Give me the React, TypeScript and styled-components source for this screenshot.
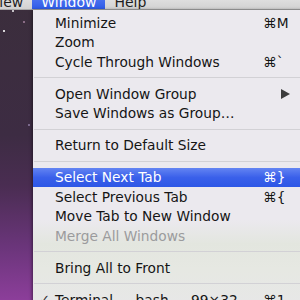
import styled, { createGlobalStyle } from "styled-components";

type Item =
  | { kind: "sep" }
  | {
      kind: "item";
      label: string;
      shortcut?: string;
      submenu?: boolean;
      checked?: boolean;
      highlighted?: boolean;
      disabled?: boolean;
    };

const items: Item[] = [
  { kind: "item", label: "Minimize", shortcut: "⌘M" },
  { kind: "item", label: "Zoom" },
  { kind: "item", label: "Cycle Through Windows", shortcut: "⌘`" },
  { kind: "sep" },
  { kind: "item", label: "Open Window Group", submenu: true },
  { kind: "item", label: "Save Windows as Group…" },
  { kind: "sep" },
  { kind: "item", label: "Return to Default Size" },
  { kind: "sep" },
  { kind: "item", label: "Select Next Tab", shortcut: "⌘}", highlighted: true },
  { kind: "item", label: "Select Previous Tab", shortcut: "⌘{" },
  { kind: "item", label: "Move Tab to New Window" },
  { kind: "item", label: "Merge All Windows", disabled: true },
  { kind: "sep" },
  { kind: "item", label: "Bring All to Front" },
  { kind: "sep" },
  { kind: "item", label: "Terminal — bash — 99×32", shortcut: "⌘1", checked: true },
];

export default function App() {
  return (
    <>
      <GlobalStyle />
      <Desktop>
        <MenuBar>
          <MenuTitle>View</MenuTitle>
          <MenuTitle $active>Window</MenuTitle>
          <MenuTitle>Help</MenuTitle>
        </MenuBar>
        <MenuPanel>
          {items.map((item, i) =>
            item.kind === "sep" ? (
              <Separator key={i} />
            ) : (
              <MenuItem
                key={i}
                $highlighted={item.highlighted}
                $disabled={item.disabled}
              >
                <Check>{item.checked ? "✓" : ""}</Check>
                <Label>{item.label}</Label>
                {item.submenu ? (
                  <SubmenuArrow viewBox="0 0 9 10">
                    <polygon points="0,0 9,5 0,10" />
                  </SubmenuArrow>
                ) : (
                  <Shortcut>{item.shortcut}</Shortcut>
                )}
              </MenuItem>
            )
          )}
        </MenuPanel>
      </Desktop>
    </>
  );
}

const GlobalStyle = createGlobalStyle`
  html, body {
    margin: 0;
    padding: 0;
    overflow: hidden;
  }
  body {
    font-family: "DejaVu Sans", "Liberation Sans", sans-serif;
  }
`;

const Desktop = styled.div`
  width: 300px;
  height: 300px;
  overflow: hidden;
  display: flex;
  flex-direction: column;
  background:
    radial-gradient(circle at 13px 11px, rgba(255, 255, 255, 0.7) 0 1px, transparent 1.5px),
    radial-gradient(circle at 4px 31px, rgba(255, 255, 255, 0.8) 0 1px, transparent 1.5px),
    radial-gradient(circle at 24px 22px, rgba(255, 200, 240, 0.4) 0 0.8px, transparent 1.2px),
    radial-gradient(circle at 29px 125px, rgba(220, 200, 255, 0.4) 0 0.8px, transparent 1.2px),
    linear-gradient(to bottom, #3b2e3c 0%, #3d2c43 45%, #4a2d52 62%, #6a357a 82%, #8c3e9a 100%);
`;

const MenuBar = styled.div`
  height: 10px;
  flex-shrink: 0;
  display: flex;
  align-items: flex-end;
  overflow: hidden;
  margin-left: -19px;
  background: linear-gradient(to bottom, #dedede, #d2d2d2);
  border-bottom: 1px solid #a9a9a9;
  box-sizing: border-box;
`;

const MenuTitle = styled.div<{ $active?: boolean }>`
  height: 16px;
  line-height: 18px;
  padding: 0 9px;
  flex-shrink: 0;
  font-size: 14px;
  color: ${(p) => (p.$active ? "#ffffff" : "#1e1e1e")};
  background: ${(p) =>
    p.$active ? "linear-gradient(to bottom, #5a7ef2, #2f5ce8)" : "transparent"};
`;

const MenuPanel = styled.div`
  margin-left: 33px;
  width: 290px;
  flex-shrink: 0;
  padding-top: 3px;
  background: linear-gradient(
    to bottom,
    #ebe9ee 0%,
    #ebe9ee 70%,
    #e3e6df 78%,
    #e6e8e2 86%,
    #e7e7e8 100%
  );
  box-shadow: -1px 0 3px rgba(0, 0, 0, 0.45);
`;

const MenuItem = styled.div<{ $highlighted?: boolean; $disabled?: boolean }>`
  display: grid;
  grid-template-columns: 22px 208px auto;
  align-items: center;
  height: 19.5px;
  font-size: 13.75px;
  white-space: nowrap;
  color: ${(p) => (p.$highlighted ? "#ffffff" : p.$disabled ? "#9b9b9d" : "#151515")};
  background: ${(p) =>
    p.$highlighted ? "linear-gradient(to bottom, #6384f2, #3a60ea 50%, #2d57e6)" : "transparent"};
`;

const Check = styled.span`
  padding-left: 6px;
  font-size: 13px;
  color: #303030;
`;

const Label = styled.span`
  overflow: visible;
`;

const Shortcut = styled.span`
  font-size: 13.75px;
`;

const SubmenuArrow = styled.svg`
  width: 9px;
  height: 10px;
  margin-left: 18px;
  fill: #3c3c3c;
`;

const Separator = styled.div`
  height: 12.5px;
  display: flex;
  align-items: center;

  &::after {
    content: "";
    flex: 1;
    margin-left: 1px;
    border-top: 1px solid #d2d1d5;
  }
`;
